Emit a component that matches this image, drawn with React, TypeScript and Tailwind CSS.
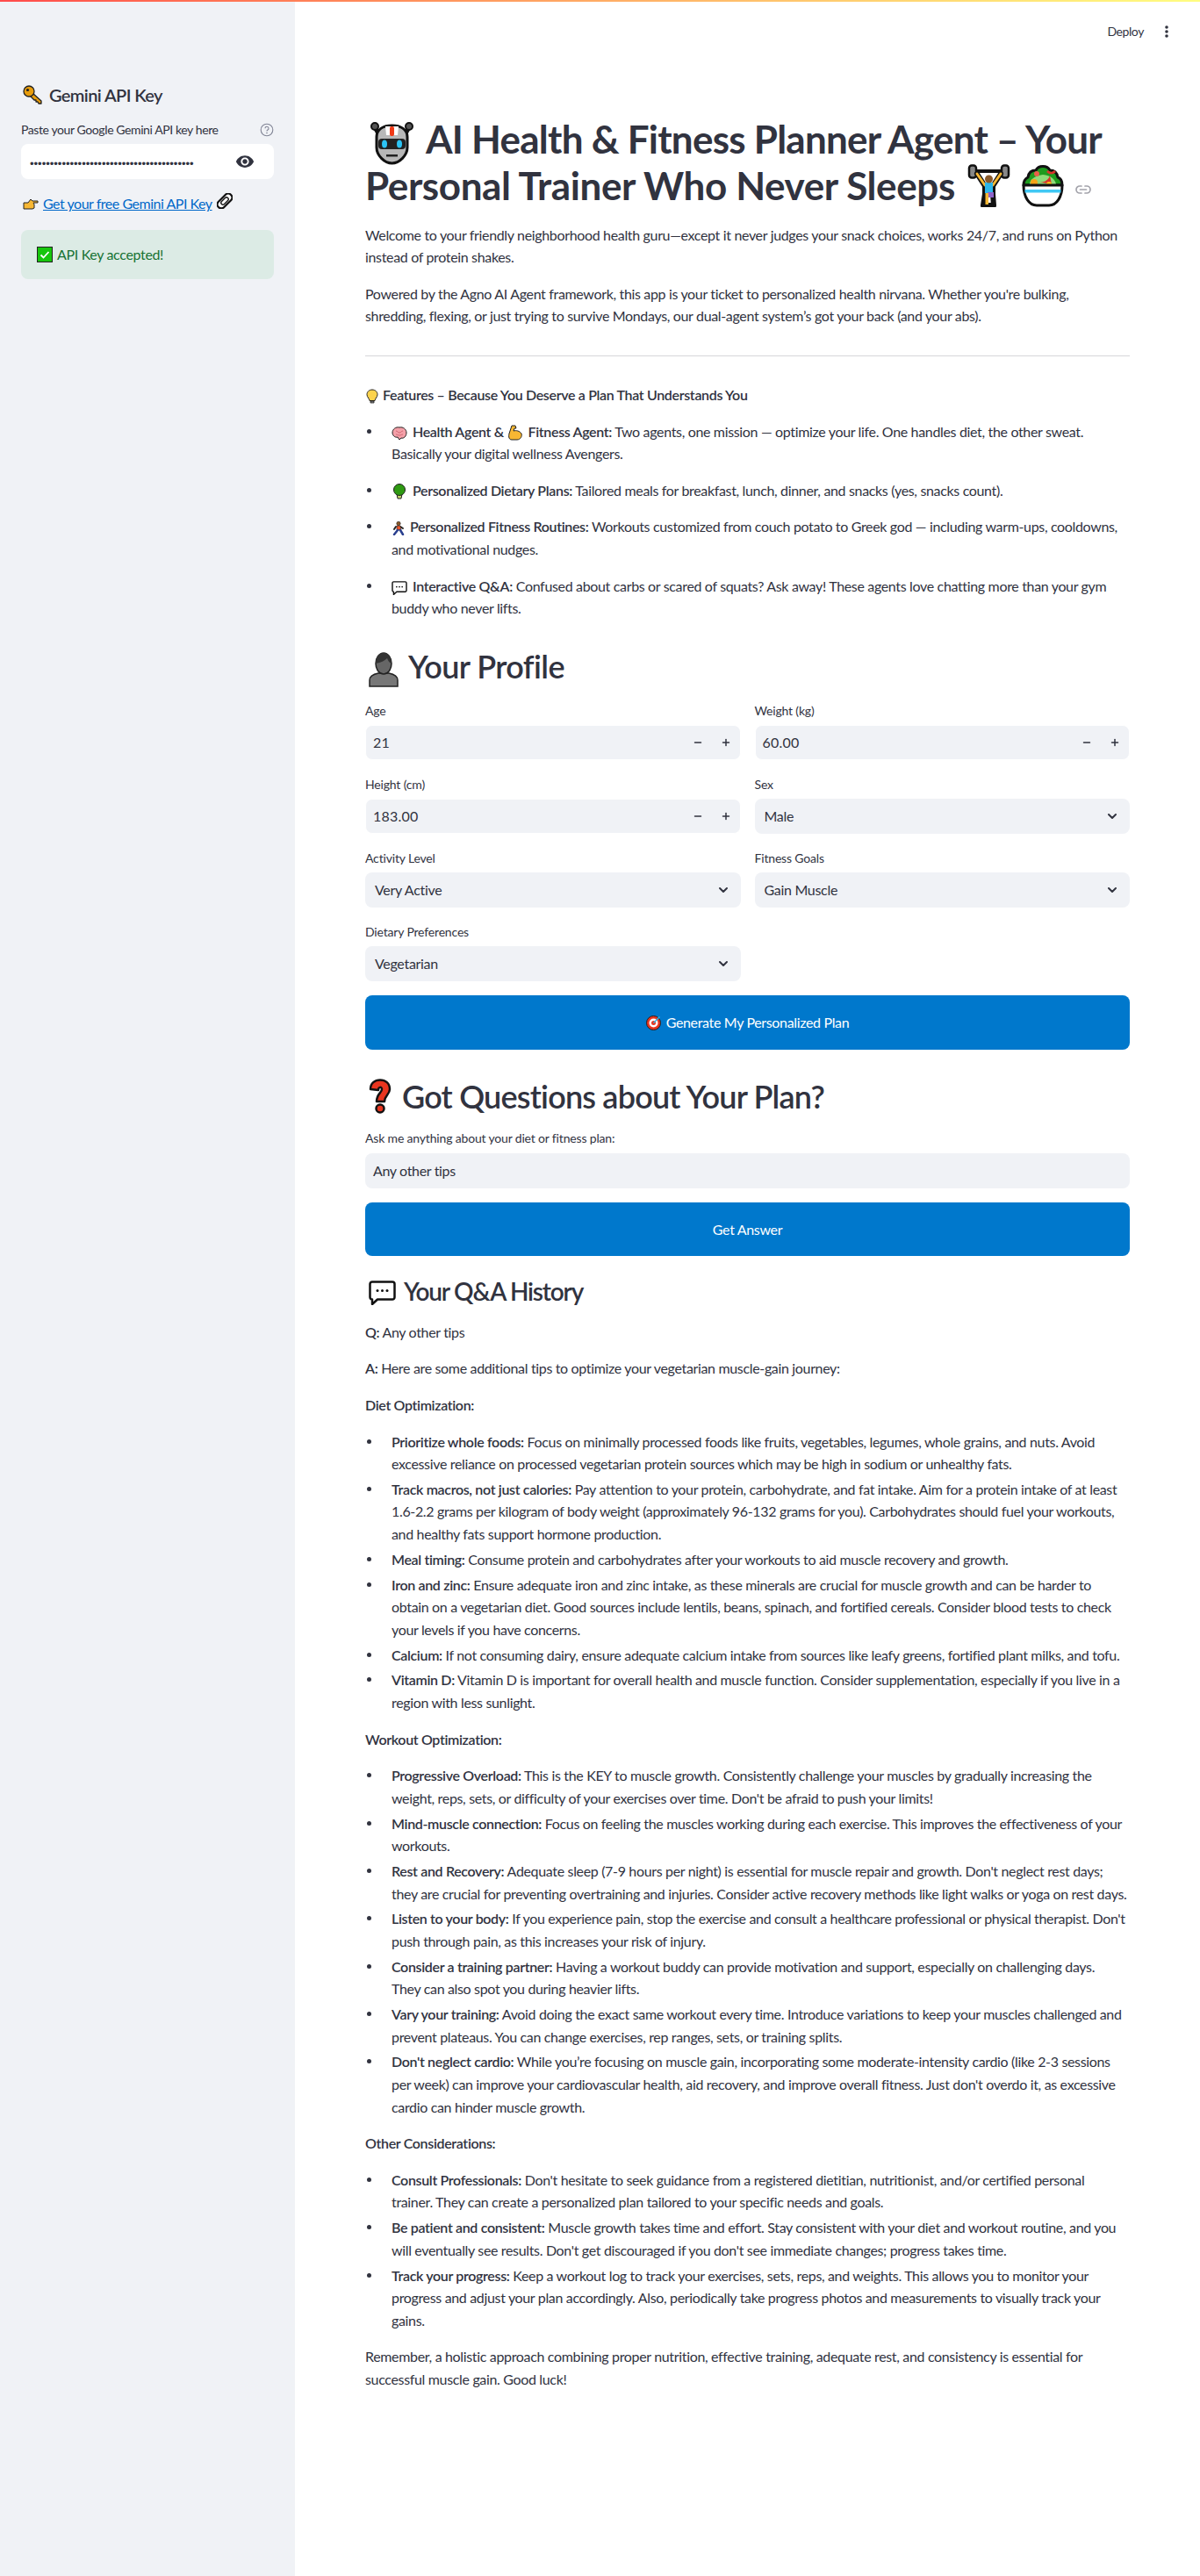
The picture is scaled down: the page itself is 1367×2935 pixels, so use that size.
import { ChevronDown, Minus, Plus } from "lucide-react";
import type { ReactNode } from "react";

type SvgProps = { className: string };

// hand drawn emoji, the reference uses a black outlined flat colour set
function Robot({ className }: SvgProps) {
  return (
    <svg viewBox="0 0 49 49" className={className}>
      <path d="M9 13 5 6M40 13l4-7" stroke="#111" strokeWidth="5" strokeLinecap="round" />
      <circle cx="5" cy="5" r="4" fill="#555" stroke="#111" strokeWidth="2" />
      <circle cx="44" cy="5" r="4" fill="#555" stroke="#111" strokeWidth="2" />
      <path d="M7 17C7 8 15 4 24.500 4S42 8 42 17v12c0 9-9 18-17.500 18S7 38 7 29Z" fill="#b8b8b8" stroke="#111" strokeWidth="3" />
      <path d="M17 5h15l-1 10H18Z" fill="#fff" />
      <rect x="22" y="5" width="5" height="11" rx="2" fill="#f03a17" />
      <rect x="9" y="19" width="31" height="12" rx="4" fill="#222" />
      <ellipse cx="16" cy="25" rx="3" ry="4.500" fill="#2cc4f5" />
      <ellipse cx="33" cy="25" rx="3" ry="4.500" fill="#2cc4f5" />
      <rect x="18" y="37" width="13" height="2.500" fill="#222" />
    </svg>
  );
}

function Lifter({ className }: SvgProps) {
  return (
    <svg viewBox="0 0 49 49" className={className}>
      <path d="M5 8h39" stroke="#111" strokeWidth="4" />
      <rect x="2" y="1.500" width="8" height="14" rx="3" fill="#888" stroke="#111" strokeWidth="2.500" />
      <rect x="39" y="1.500" width="8" height="14" rx="3" fill="#888" stroke="#111" strokeWidth="2.500" />
      <path d="M11 11 20 25v9l-2 13h12l-1-13v-9l9-14" fill="none" stroke="#111" strokeWidth="6" strokeLinejoin="round" strokeLinecap="round" />
      <path d="M11 11 20 24M38 11l-9 13" stroke="#f7b733" strokeWidth="3" strokeLinecap="round" />
      <rect x="20" y="21" width="9" height="12" fill="#2cb6ea" />
      <rect x="23" y="32" width="7" height="6" fill="#8e63c9" />
      <path d="M20.500 33h3.500v13h-3.500Z" fill="#f7b733" />
      <circle cx="24.500" cy="17" r="4.500" fill="#8a5a2b" />
    </svg>
  );
}

function Salad({ className }: SvgProps) {
  return (
    <svg viewBox="0 0 50 49" className={className}>
      <path d="M3 24c0-6 3-8 5-9 1-7 6-8 9-8 3-6 13-6 16 0 4 0 8 2 9 8 3 1 5 4 5 9Z" fill="#1e9b1e" stroke="#111" strokeWidth="3" strokeLinejoin="round" />
      <path d="M10 23c0-5 4-9 15-11 9 1 14 5 15 11Z" fill="#8fdc7a" />
      <circle cx="15" cy="21" r="4" fill="#f5a318" />
      <circle cx="18" cy="11" r="3" fill="#e8604a" />
      <path d="M19 20c6 2 12-1 14-7l2 10Z" fill="#d9342b" />
      <circle cx="32" cy="23" r="3" fill="#f7c51e" />
      <path d="M30 8c3 3 6 3 9 0" stroke="#d9342b" strokeWidth="2.500" fill="none" />
      <path d="M3 24h44c0 13-6 23-15 23H18C9 47 3 37 3 24Z" fill="#fff" stroke="#111" strokeWidth="3" strokeLinejoin="round" />
      <rect x="4.500" y="29" width="41" height="3.500" fill="#40c8f4" />
    </svg>
  );
}

function Key({ className }: SvgProps) {
  return (
    <svg viewBox="0 0 23 22" className={className}>
      <path d="M11 9 21 18v3h-3l-1-2h-2v-2h-2l-5-5" fill="#e79c0c" stroke="#222" strokeWidth="1.300" strokeLinejoin="round" />
      <circle cx="7" cy="7" r="6" fill="#e79c0c" stroke="#222" strokeWidth="1.300" />
      <circle cx="5.500" cy="5.500" r="1.600" fill="#222" />
    </svg>
  );
}

function PointRight({ className }: SvgProps) {
  return (
    <svg viewBox="0 0 18 14" className={className}>
      <path d="M1 6h5l3-4 2 2h6v2h-5l1 2v4l-2 1H1Z" fill="#f7b733" stroke="#222" strokeWidth="1" strokeLinejoin="round" />
    </svg>
  );
}

function Chain({ className }: SvgProps) {
  return (
    <svg viewBox="0 0 18 18" className={className}>
      <g transform="rotate(-45 9 9)" fill="#fff" stroke="#111">
        <rect x="-1" y="4.500" width="20" height="9" rx="4.500" strokeWidth="2.200" />
        <rect x="4" y="6.800" width="10" height="4.400" rx="2.200" strokeWidth="1.400" />
      </g>
    </svg>
  );
}

function CheckBox({ className }: SvgProps) {
  return (
    <svg viewBox="0 0 18 18" className={className}>
      <rect x="0.500" y="0.500" width="17" height="17" fill="#16c60c" stroke="#222" />
      <path d="m4.500 9.500 3 3 6-6.500" fill="none" stroke="#fff" strokeWidth="1.800" />
    </svg>
  );
}

function Bulb({ className }: SvgProps) {
  return (
    <svg viewBox="0 0 14 17" className={className}>
      <path d="M7 1c3.500 0 6 2.500 6 5.500 0 3-2.500 4-3 7H4c-.5-3-3-4-3-7C1 3.500 3.500 1 7 1Z" fill="#fcd34d" stroke="#222" strokeWidth="1" />
      <path d="M5 14h4v2H5Z" fill="#888" stroke="#222" strokeWidth=".8" />
    </svg>
  );
}

function Brain({ className }: SvgProps) {
  return (
    <svg viewBox="0 0 18 16" className={className}>
      <path d="M9 1c4-1 8 2 8 6 0 4-3 7-6 6l-2 2-2-3C4 13 1 10 1 7c0-4 4-7 8-6Z" fill="#f4a0a8" stroke="#222" strokeWidth="1" />
      <path d="M5 5c2 0 2 2 4 2s2-2 4-2M5 9c2 0 2 1 4 1s2-1 4-1" fill="none" stroke="#c85a68" strokeWidth=".8" />
    </svg>
  );
}

function Muscle({ className }: SvgProps) {
  return (
    <svg viewBox="0 0 19 18" className={className}>
      <path d="M5 1h4l1 3H8l-1 3c3-1 7 0 9 3 1 3-1 7-5 7H5C2 17 1 14 2 10Z" fill="#f7b733" stroke="#222" strokeWidth="1" strokeLinejoin="round" />
    </svg>
  );
}

function Broccoli({ className }: SvgProps) {
  return (
    <svg viewBox="0 0 18 18" className={className}>
      <path d="M6 12h6l-1 5H7Z" fill="#c5d86d" stroke="#222" strokeWidth="1" />
      <circle cx="9" cy="7" r="6.500" fill="#2f9a12" stroke="#222" strokeWidth="1" />
    </svg>
  );
}

function Runner({ className }: SvgProps) {
  return (
    <svg viewBox="0 0 16 16" className={className}>
      <circle cx="8" cy="2.500" r="2.200" fill="#8a5a2b" stroke="#222" strokeWidth=".6" />
      <path d="M5 6 3 9M10 6l3 2" stroke="#222" strokeWidth="2" strokeLinecap="round" />
      <path d="M6 5h4l1 5H6Z" fill="#e8562a" stroke="#222" strokeWidth=".6" />
      <path d="M7 10 3 15M10 10l3 5" stroke="#2a3f8f" strokeWidth="2.500" strokeLinecap="round" />
    </svg>
  );
}

function Speech({ className }: SvgProps) {
  return (
    <svg viewBox="0 0 31 28" className={className}>
      <path d="M4 1.500h23A2.500 2.500 0 0 1 29.500 4v15a2.500 2.500 0 0 1-2.500 2.500H10L4 27v-5.500A2.500 2.500 0 0 1 1.500 19V4A2.500 2.500 0 0 1 4 1.500Z" fill="#fff" stroke="#111" strokeWidth="2.500" strokeLinejoin="round" />
      <circle cx="10" cy="11.500" r="1.500" fill="#111" />
      <circle cx="15.500" cy="11.500" r="1.500" fill="#111" />
      <circle cx="21" cy="11.500" r="1.500" fill="#111" />
    </svg>
  );
}

function Person({ className }: SvgProps) {
  return (
    <svg viewBox="0 0 34 40" className={className}>
      <path d="M1 39v-7c0-5 5-7 10-8h12c5 1 10 3 10 8v7Z" fill="#777" stroke="#222" strokeWidth="1.500" />
      <ellipse cx="17" cy="13" rx="9" ry="12" fill="#666" stroke="#222" strokeWidth="1.500" />
      <path d="M8 13C8 5 12 1 17 1s9 4 9 12c-3-1-4-4-5-6-3 3-7 5-13 6Z" fill="#333" />
    </svg>
  );
}

function Target({ className }: SvgProps) {
  return (
    <svg viewBox="0 0 18 18" className={className}>
      <circle cx="8.500" cy="9.500" r="8" fill="#e8351f" stroke="#222" strokeWidth="1" />
      <circle cx="8.500" cy="9.500" r="5" fill="#fff" />
      <circle cx="8.500" cy="9.500" r="2.500" fill="#e8351f" />
      <path d="m8.500 9.500 7-7" stroke="#2cb6ea" strokeWidth="1.500" />
    </svg>
  );
}

function Question({ className }: SvgProps) {
  return (
    <svg viewBox="0 0 26 40" className={className}>
      <path d="M2 12C2 5 7 1.500 13 1.500S24 5 24 12c0 6-6 7-6 14h-9c0-9 6-10 6-14 0-3-4-3-4 1Z" fill="#e8351f" stroke="#111" strokeWidth="2.500" strokeLinejoin="round" />
      <circle cx="13" cy="34" r="4.500" fill="#e8351f" stroke="#111" strokeWidth="2.500" />
    </svg>
  );
}

function LinkMark({ className }: SvgProps) {
  return (
    <svg viewBox="0 0 18 10" className={className}>
      <path d="M7 1H5a4 4 0 0 0 0 8h2M11 1h2a4 4 0 0 1 0 8h-2M5.500 5h7" fill="none" stroke="#a3a3ab" strokeWidth="1.700" strokeLinecap="round" />
    </svg>
  );
}

function Label({ children }: { children: ReactNode }) {
  return <div className="h-[22px] mb-[5px] text-sm leading-[22px] tracking-[-0.17px]">{children}</div>;
}

function NumberField({ label, value }: { label: string; value: string }) {
  return (
    <div>
      <Label>{label}</Label>
      <div className="h-10 border border-white bg-[#f0f2f6] flex items-center pl-2 pr-2.5 rounded-lg">
        <span className="flex-1 tracking-[0.2px]">{value}</span>
        <Minus size={12} strokeWidth={3} className="mr-5" />
        <Plus size={12} strokeWidth={3} />
      </div>
    </div>
  );
}

function SelectField({ label, value }: { label: string; value: string }) {
  return (
    <div>
      <Label>{label}</Label>
      <div className="h-10 rounded-lg bg-[#f0f2f6] flex items-center pl-[11px] pr-[12px]">
        <span className="flex-1 tracking-[-0.3px]">{value}</span>
        <ChevronDown size={16} strokeWidth={3} />
      </div>
    </div>
  );
}

type Tip = [string, string];

const dietTips: Tip[] = [
  ["Prioritize whole foods:", "Focus on minimally processed foods like fruits, vegetables, legumes, whole grains, and nuts. Avoid excessive reliance on processed vegetarian protein sources which may be high in sodium or unhealthy fats."],
  ["Track macros, not just calories:", "Pay attention to your protein, carbohydrate, and fat intake. Aim for a protein intake of at least 1.6-2.2 grams per kilogram of body weight (approximately 96-132 grams for you). Carbohydrates should fuel your workouts, and healthy fats support hormone production."],
  ["Meal timing:", "Consume protein and carbohydrates after your workouts to aid muscle recovery and growth."],
  ["Iron and zinc:", "Ensure adequate iron and zinc intake, as these minerals are crucial for muscle growth and can be harder to obtain on a vegetarian diet. Good sources include lentils, beans, spinach, and fortified cereals. Consider blood tests to check your levels if you have concerns."],
  ["Calcium:", "If not consuming dairy, ensure adequate calcium intake from sources like leafy greens, fortified plant milks, and tofu."],
  ["Vitamin D:", "Vitamin D is important for overall health and muscle function. Consider supplementation, especially if you live in a region with less sunlight."],
];

const workoutTips: Tip[] = [
  ["Progressive Overload:", "This is the KEY to muscle growth. Consistently challenge your muscles by gradually increasing the weight, reps, sets, or difficulty of your exercises over time. Don't be afraid to push your limits!"],
  ["Mind-muscle connection:", "Focus on feeling the muscles working during each exercise. This improves the effectiveness of your workouts."],
  ["Rest and Recovery:", "Adequate sleep (7-9 hours per night) is essential for muscle repair and growth. Don't neglect rest days; they are crucial for preventing overtraining and injuries. Consider active recovery methods like light walks or yoga on rest days."],
  ["Listen to your body:", "If you experience pain, stop the exercise and consult a healthcare professional or physical therapist. Don't push through pain, as this increases your risk of injury."],
  ["Consider a training partner:", "Having a workout buddy can provide motivation and support, especially on challenging days.\nThey can also spot you during heavier lifts."],
  ["Vary your training:", "Avoid doing the exact same workout every time. Introduce variations to keep your muscles challenged and prevent plateaus. You can change exercises, rep ranges, sets, or training splits."],
  ["Don't neglect cardio:", "While you’re focusing on muscle gain, incorporating some moderate-intensity cardio (like 2-3 sessions per week) can improve your cardiovascular health, aid recovery, and improve overall fitness. Just don't overdo it, as excessive cardio can hinder muscle growth."],
];

const otherTips: Tip[] = [
  ["Consult Professionals:", "Don't hesitate to seek guidance from a registered dietitian, nutritionist, and/or certified personal\ntrainer. They can create a personalized plan tailored to your specific needs and goals."],
  ["Be patient and consistent:", "Muscle growth takes time and effort. Stay consistent with your diet and workout routine, and you will eventually see results. Don't get discouraged if you don't see immediate changes; progress takes time."],
  ["Track your progress:", "Keep a workout log to track your exercises, sets, reps, and weights. This allows you to monitor your progress and adjust your plan accordingly. Also, periodically take progress photos and measurements to visually track your gains."],
];

const bullet =
  "relative before:content-[''] before:absolute before:left-[-28px] before:top-[10px] before:w-[5px] before:h-[5px] before:rounded-full before:bg-[#31333f]";

function TipList({ tips }: { tips: Tip[] }) {
  return (
    <ul className="pl-[30px] mb-4 space-y-[3.2px]">
      {tips.map(([head, body]) => (
        <li key={head} className={`whitespace-pre-line ${bullet}`}>
          <strong className="font-semibold">{head}</strong> {body}
        </li>
      ))}
    </ul>
  );
}

export default function App() {
  return (
    <div className="min-h-[2935px] bg-white text-[#31333f] text-base leading-[25.6px] font-[Lato,sans-serif] tracking-[-0.34px]">
      <div className="h-0.5 bg-gradient-to-r from-[#ff4b4b] to-[#fffd80]" />
      <div className="flex min-h-[2933px]">
        {/* Sidebar */}
        <aside className="w-[336px] shrink-0 bg-[#f0f2f6] px-6 pt-[94px]">
          <h3 className="flex items-center h-6 text-xl font-semibold pl-0.5 mb-4 tracking-[-0.6px]">
            <Key className="w-[23px] h-[22px] mr-[7px]" />
            Gemini API Key
          </h3>
          <div className="flex items-center justify-between h-6 mb-1 text-sm tracking-[-0.4px]">
            <span>Paste your Google Gemini API key here</span>
            <svg viewBox="0 0 16 16" className="w-4 h-4">
              <circle cx="8" cy="8" r="6.800" fill="none" stroke="#808495" strokeWidth="1.100" />
              <path d="M6 6.300a2 2 0 1 1 3 1.700c-.7.400-1 .7-1 1.500" fill="none" stroke="#808495" strokeWidth="1.100" />
              <circle cx="8" cy="11.500" r=".8" fill="#808495" />
            </svg>
          </div>
          <div className="flex items-center h-10 rounded-lg bg-white pl-2.5 pr-[22px]">
            <span className="flex-1 text-[13px] leading-none tracking-[0px] pt-1 font-['Liberation_Sans',sans-serif]">•••••••••••••••••••••••••••••••••••••••••</span>
            <svg viewBox="0 0 24 24" className="w-[22px] h-[22px] fill-[#31333f]">
              <path d="M12 4.500C7 4.500 2.730 7.610 1 12c1.730 4.390 6 7.500 11 7.500s9.270-3.110 11-7.500c-1.730-4.390-6-7.500-11-7.500zM12 17c-2.760 0-5-2.240-5-5s2.240-5 5-5 5 2.240 5 5-2.240 5-5 5zm0-8c-1.660 0-3 1.340-3 3s1.340 3 3 3 3-1.340 3-3-1.340-3-3-3z" />
            </svg>
          </div>
          <p className="flex items-center mt-[15px] h-[25.6px] whitespace-nowrap tracking-[-0.48px]">
            <PointRight className="w-[18px] h-3.5 ml-0.5 mr-[5px]" />
            <a href="#key" className="text-[#0068c9] underline">Get your free Gemini API Key</a>
            <Chain className="w-[18px] h-[18px] ml-[5px] -mt-[6px]" />
          </p>
          <div className="flex items-center h-14 mt-[17px] rounded-lg bg-[#dcebe5] text-[#177233] pl-[18px]">
            <CheckBox className="w-[18px] h-[18px] mr-[5px]" />
            API Key accepted!
          </div>
        </aside>

        {/* Main column */}
        <main className="flex-1 min-w-0">
          <div className="flex items-center justify-end h-[68px] pr-[36px] text-sm tracking-[-0.4px]">
            <span className="mr-6">Deploy</span>
            <svg viewBox="0 0 4 14" className="w-1 h-3.5">
              <circle cx="2" cy="2" r="1.800" fill="#31333f" />
              <circle cx="2" cy="7" r="1.800" fill="#31333f" />
              <circle cx="2" cy="12" r="1.800" fill="#31333f" />
            </svg>
          </div>
          <div className="ml-20 w-[871px] pt-[62px]">
            <h1 className="text-[44px] leading-[52.8px] font-bold mb-[17px]">
              <Robot className="inline-block w-[49px] h-[49px] -my-2 ml-1.5 mr-[14px] align-[-5px]" />
              <span className="tracking-[-0.75px]">AI Health &amp; Fitness Planner Agent – Your</span>{" "}
              <span className="tracking-[-0.4px]">Personal Trainer Who Never Sleeps</span>
              <Lifter className="inline-block w-[49px] h-[49px] -my-2 ml-[14px] mr-3 align-[0px]" />
              <Salad className="inline-block w-[50px] h-[49px] -my-2 mr-3 align-[0px]" />
              <LinkMark className="inline-block w-[18px] h-2.5 align-[7px]" />
            </h1>
            <p className="mb-4">
              Welcome to your friendly neighborhood health guru—except it never judges your snack choices, works 24/7, and runs on Python instead of protein shakes.
            </p>
            <p className="mb-8">
              Powered by the Agno AI Agent framework, this app is your ticket to personalized health nirvana. Whether you're bulking, shredding, flexing, or just trying to survive Mondays, our dual-agent system’s got your back (and your abs).
            </p>
            <hr className="border-t border-[#d6d6d9] mb-[31px]" />
            <p className="mb-4 font-semibold">
              <Bulb className="inline-block w-3.5 h-[17px] ml-px mr-[5px] -my-1 align-[0px]" />
              Features – Because You Deserve a Plan That Understands You
            </p>
            <ul className="pl-[30px] mb-8">
              <li className={`mb-4 ${bullet}`}>
                <Brain className="inline-block w-[18px] h-4 -my-1 mr-[6px] align-[0px]" />
                <strong className="font-semibold">Health Agent &amp; </strong>
                <Muscle className="inline-block w-[19px] h-[18px] -my-1 mr-[5px] align-[0px]" />
                <strong className="font-semibold">Fitness Agent:</strong> Two agents, one mission — optimize your life. One handles diet, the other sweat. Basically your digital wellness Avengers.
              </li>
              <li className={`mb-4 ${bullet}`}>
                <Broccoli className="inline-block w-[18px] h-[18px] -my-1 mr-[6px] align-[0px]" />
                <strong className="font-semibold">Personalized Dietary Plans:</strong> Tailored meals for breakfast, lunch, dinner, and snacks (yes, snacks count).
              </li>
              <li className={`mb-4 ${bullet}`}>
                <Runner className="inline-block w-4 h-4 -my-1 mr-[5px] align-[0px]" />
                <strong className="font-semibold">Personalized Fitness Routines:</strong> Workouts customized from couch potato to Greek god — including warm-ups, cooldowns, and motivational nudges.
              </li>
              <li className={`mb-4 ${bullet}`}>
                <Speech className="inline-block w-[18px] h-4 -my-1 mr-[6px] align-[0px]" />
                <strong className="font-semibold">Interactive Q&amp;A:</strong> Confused about carbs or scared of squats? Ask away! These agents love chatting more than your gym buddy who never lifts.
              </li>
            </ul>

            <h2 className="text-4xl leading-[43.2px] font-semibold tracking-[-0.6px] mb-[18px]">
              <Person className="inline-block w-[34px] h-10 -my-2 ml-1 mr-[11px] align-[-2px]" />
              Your Profile
            </h2>
            <div className="grid grid-cols-2 gap-x-4 gap-y-[17px] mb-4">
              <NumberField label="Age" value="21" />
              <NumberField label="Weight (kg)" value="60.00" />
              <NumberField label="Height (cm)" value="183.00" />
              <SelectField label="Sex" value="Male" />
              <SelectField label="Activity Level" value="Very Active" />
              <SelectField label="Fitness Goals" value="Gain Muscle" />
              <SelectField label="Dietary Preferences" value="Vegetarian" />
            </div>
            <button className="flex items-center justify-center w-full h-[62px] rounded-lg bg-[#0078cc] text-white mb-8">
              <Target className="w-[18px] h-[18px] mr-[5px]" />
              Generate My Personalized Plan
            </button>

            <h2 className="text-4xl leading-[43.2px] font-semibold tracking-[-0.8px] mb-[14px]">
              <Question className="inline-block w-[26px] h-10 -my-2 ml-1 mr-3 align-[2px]" />
              Got Questions about Your Plan?
            </h2>
            <div className="h-6 mb-[5px] text-sm leading-6 tracking-[-0.17px]">Ask me anything about your diet or fitness plan:</div>
            <div className="flex items-center h-10 rounded-lg bg-[#f0f2f6] pl-[9px] mb-4">Any other tips</div>
            <button className="block w-full h-[61px] rounded-lg bg-[#0078cc] text-white mb-6">Get Answer</button>

            <h3 className="text-[28px] leading-[33.6px] font-semibold tracking-[-1.2px] mb-4">
              <Speech className="inline-block w-[31px] h-7 -my-1 ml-1 mr-[9px] align-[-1px]" />
              Your Q&amp;A History
            </h3>
            <p className="mb-4"><strong className="font-semibold">Q:</strong> Any other tips</p>
            <p className="mb-4"><strong className="font-semibold">A:</strong> Here are some additional tips to optimize your vegetarian muscle-gain journey:</p>
            <p className="mb-4 font-semibold">Diet Optimization:</p>
            <TipList tips={dietTips} />
            <p className="mb-4 font-semibold">Workout Optimization:</p>
            <TipList tips={workoutTips} />
            <p className="mb-4 font-semibold">Other Considerations:</p>
            <TipList tips={otherTips} />
            <p>Remember, a holistic approach combining proper nutrition, effective training, adequate rest, and consistency is essential for successful muscle gain. Good luck!</p>
          </div>
        </main>
      </div>
    </div>
  );
}
